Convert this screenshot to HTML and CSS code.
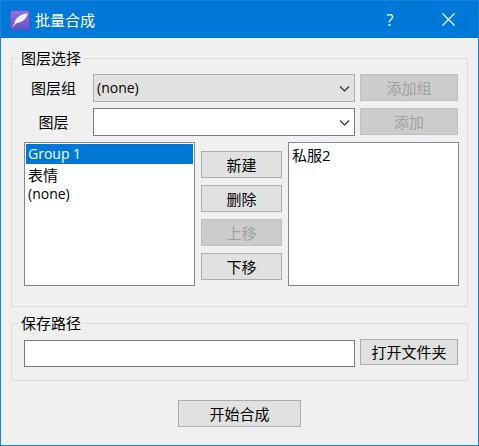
FILE: index.html
```html
<!DOCTYPE html>
<html lang="zh-CN">
<head>
<meta charset="utf-8">
<title>批量合成</title>
<link rel="stylesheet" href="styles.css">
</head>
<body>
<div class="window">
  <header class="titlebar">
    <svg class="app-icon" viewBox="0 0 20 20" aria-hidden="true">
      <defs>
        <linearGradient id="tile" x1="0" y1="0" x2="0" y2="1">
          <stop offset="0" stop-color="#8a78de"/>
          <stop offset="1" stop-color="#6a50c8"/>
        </linearGradient>
      </defs>
      <rect x="0.5" y="0.5" width="19" height="19" rx="2" fill="url(#tile)" stroke="#5a55c4"/>
      <path d="M2.200 16.800 L4.500 13.500 C4.500 10.500 6.500 8 9 6.200 C11.500 4.500 14.500 3.800 17.600 3.600 C17.500 5.500 16.500 7.500 15 9 C13.500 11 9.500 12.500 6 13.500 L3 16.800 Z" fill="#f1f0f4"/>
    </svg>
    <h1 class="title">批量合成</h1>
    <button class="caption-button help" type="button" aria-label="帮助">?</button>
    <button class="caption-button close" type="button" aria-label="关闭">
      <svg viewBox="0 0 13 13" aria-hidden="true"><path d="M0.500 0.500 L12.500 12.500 M12.500 0.500 L0.500 12.500"/></svg>
    </button>
  </header>
  <main class="content">
    <fieldset class="group layers">
      <legend>图层选择</legend>
      <div class="row">
        <label for="group">图层组</label>
        <div class="combo">
          <select id="group" class="list-only"><option>(none)</option></select>
          <svg viewBox="0 0 11 6" aria-hidden="true"><path d="M1 0.500 L5.500 5 L10 0.500"/></svg>
        </div>
        <button class="button" type="button" disabled>添加组</button>
      </div>
      <div class="row">
        <label for="layer">图层</label>
        <div class="combo">
          <select id="layer"><option></option></select>
          <svg viewBox="0 0 11 6" aria-hidden="true"><path d="M1 0.500 L5.500 5 L10 0.500"/></svg>
        </div>
        <button class="button" type="button" disabled>添加</button>
      </div>
      <div class="lists">
        <select class="listbox" size="7" aria-label="组列表">
          <option class="latin" selected>Group 1</option>
          <option>表情</option>
          <option class="latin">(none)</option>
        </select>
        <div class="actions">
          <button class="button" type="button">新建</button>
          <button class="button" type="button">删除</button>
          <button class="button" type="button" disabled>上移</button>
          <button class="button" type="button">下移</button>
        </div>
        <select class="listbox" size="7" aria-label="图层列表">
          <option>私服2</option>
        </select>
      </div>
    </fieldset>
    <fieldset class="group path">
      <legend>保存路径</legend>
      <div class="path-row">
        <input class="textbox" type="text" aria-label="保存路径">
        <button class="button browse" type="button">打开文件夹</button>
      </div>
    </fieldset>
    <button class="button start" type="button">开始合成</button>
  </main>
</div>
</body>
</html>
```
FILE: styles.css
```css
* {
  box-sizing: border-box;
}

body {
  margin: 0;
  color: #000;
  background: #f0f0f0;
}

body,
button,
input,
select {
  font: 15px/20px "Open Sans", "Noto Sans CJK SC", sans-serif;
}

.window {
  min-height: 100vh;
  border: 1px solid #1883d7;
}

.titlebar {
  display: flex;
  align-items: center;
  height: 37px;
  padding-left: 9px;
  color: #fff;
  background: #0078d7;
}

.app-icon {
  width: 20px;
  height: 20px;
}

.title {
  flex: 1;
  margin: 0 0 0 5px;
  font-size: 15px;
  font-weight: 400;
}

.caption-button {
  display: flex;
  align-items: center;
  justify-content: center;
  width: 56px;
  height: 36px;
  padding: 0;
  border: 0;
  color: #fff;
  background: none;
}

.caption-button.help {
  font-size: 16px;
}

.caption-button.close {
  width: 60px;
}

.caption-button svg {
  width: 13px;
  height: 13px;
  fill: none;
  stroke: #fff;
  stroke-width: 1.2;
}

.content {
  display: flex;
  flex-direction: column;
  padding: 10px;
}

.group {
  min-width: 0;
  margin: 0;
  border: 1px solid #dcdcdc;
}

.group legend {
  height: 20px;
  margin-left: -6px;
  padding: 0 3px;
}

.layers {
  padding: 6px 8px 20px 12px;
}

.row {
  display: grid;
  grid-template-columns: 64px 1fr 98px;
  column-gap: 5px;
  margin: 0 1px 6px 0;
}

.row label {
  padding: 4px 5px 0 0;
  text-align: center;
}

.combo {
  position: relative;
}

.combo select {
  display: block;
  width: 100%;
  height: 28px;
  padding: 0 24px 0 3px;
  border: 1px solid #7a7a7a;
  border-radius: 0;
  color: #000;
  background: #fff;
  font-size: 14px;
  appearance: none;
}

.combo .list-only {
  border-color: #adadad;
  background: #e1e1e1;
}

.combo svg {
  position: absolute;
  top: 12px;
  right: 5px;
  width: 11px;
  height: 6px;
  fill: none;
  stroke: #303030;
  stroke-width: 1.2;
  pointer-events: none;
}

.button {
  height: 27px;
  padding: 0;
  border: 1px solid #adadad;
  color: #000;
  background: #e1e1e1;
}

.button:disabled {
  border-color: #bfbfbf;
  color: #a0a0a0;
  background: #ccc;
}

.lists {
  display: grid;
  grid-template-columns: 1fr 81px 1fr;
  column-gap: 6px;
}

.listbox {
  width: 100%;
  height: 144px;
  padding: 1px;
  border: 1px solid #828790;
  border-radius: 0;
  color: #000;
  background: #fff;
  overflow: hidden;
}

.listbox option {
  height: 20px;
  min-height: 20px;
  padding: 0 2px;
  line-height: 20px;
}

.listbox .latin {
  font-size: 14px;
}

.listbox option:checked {
  color: #fff;
  background: linear-gradient(#0078d7, #0078d7);
}

.actions {
  display: flex;
  flex-direction: column;
  gap: 7px;
  padding-top: 9px;
}

.path {
  margin-top: 6px;
  padding: 6px 9px 13px 12px;
}

.path-row {
  display: grid;
  grid-template-columns: 1fr 98px;
  column-gap: 5px;
  height: 28px;
}

.textbox {
  align-self: end;
  width: 100%;
  height: 27px;
  padding: 0 3px;
  border: 1px solid #7a7a7a;
  background: #fff;
}

.browse {
  height: 26px;
}

.start {
  align-self: center;
  width: 123px;
  margin-top: 19px;
}
```
